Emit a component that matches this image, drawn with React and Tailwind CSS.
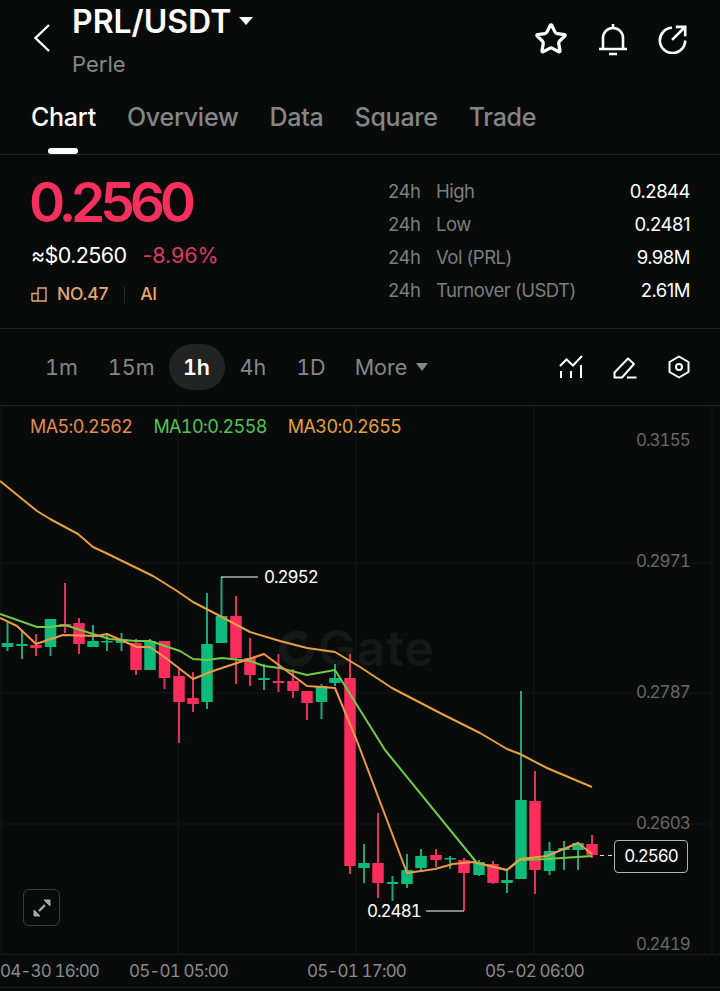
import { Star } from "lucide-react";

const UP = 1;
const DOWN = 0;

// x, wick top, wick bottom, body top, body bottom, direction (page pixels)
const CANDLES = [
  [7.5, 620, 650, 642, 646, UP],
  [22, 630, 658, 643, 645, UP],
  [36, 633, 655, 644, 647, DOWN],
  [50.5, 618, 655, 618, 646, UP],
  [65, 582, 632, 623, 626, DOWN],
  [79, 617, 653, 622, 643, DOWN],
  [93, 624, 646, 640, 646, UP],
  [107, 633, 650, 640, 641.5, UP],
  [121.5, 632, 650, 638, 642, UP],
  [136, 638, 674, 642, 669, DOWN],
  [150, 638, 669, 640, 669, UP],
  [164.5, 640, 688, 640, 677, DOWN],
  [179, 667, 742, 675, 701, DOWN],
  [193, 671, 711, 697, 703, DOWN],
  [207, 592, 708, 643, 701, UP],
  [221.5, 576, 642, 615, 642, UP],
  [236, 595, 683, 615, 657, DOWN],
  [250, 637, 685, 657, 674, DOWN],
  [264, 663, 689, 677, 679, UP],
  [278.5, 653, 691, 680, 682, DOWN],
  [293, 668, 697, 680, 690, DOWN],
  [307, 690, 719, 690, 702, DOWN],
  [321.5, 683, 718, 685, 701, UP],
  [335, 663, 685, 677, 682, UP],
  [350, 653, 873, 677, 865, DOWN],
  [364, 843, 882, 862, 867, UP],
  [378, 812, 897, 862, 882, DOWN],
  [392.5, 875, 900, 881, 883, UP],
  [407, 853, 887, 869, 883, UP],
  [421, 848, 870, 855, 867, UP],
  [436, 848, 866, 854, 859, DOWN],
  [450, 855, 868, 857, 858.5, UP],
  [464, 857, 910, 859, 872, DOWN],
  [479, 859, 875, 861, 874, UP],
  [493, 860, 883, 863, 882, DOWN],
  [507, 868, 892, 879, 882, UP],
  [521, 690, 878, 799, 878, UP],
  [535, 770, 893, 800, 869, DOWN],
  [549.5, 841, 874, 850, 870, UP],
  [564, 840, 869, 847, 849, UP],
  [578, 841, 869, 842, 849, UP],
  [592, 834, 857, 843, 854, DOWN],
];

const MA5 =
  "0,617 17,625 36,643 63,634 97,635 107,633 137,646 150,646 167,658 193,678 213,670 243,660 264,653 307,685 335,687 357,740 407,872 435,868 453,863 473,861 507,869 520,858 547,855 578,842 592,853";
const MA10 =
  "0,613 37,626 50,626 65,624 93,633 110,638 136,640 150,640 180,650 193,658 207,659 222,657 250,660 264,665 280,667 307,674 335,669 385,749 477,862 507,869 520,859 547,858 592,855";
const MA30 =
  "0,480 37,510 50,518 78,533 93,546 108,553 153,575 177,590 193,601 220,615 250,631 280,640 307,647 335,651 360,666 392,687 440,712 480,732 507,748 520,753 547,767 592,786";

const GRID_Y = [562, 692, 823];
const GRID_X = [1, 178, 356, 534];

const PRICE_LABELS = [
  ["0.3155", "top-[23px]"],
  ["0.2971", "top-[144px]"],
  ["0.2787", "top-[275px]"],
  ["0.2603", "top-[406px]"],
  ["0.2419", "top-[527px]"],
];

const STATS = [
  ["High", "0.2844"],
  ["Low", "0.2481"],
  ["Vol (PRL)", "9.98M"],
  ["Turnover (USDT)", "2.61M"],
];

function Chart() {
  return (
    <svg viewBox="0 405 720 581" className="relative block w-[720px] h-[581px]">
      {GRID_Y.map((y) => (
        <line key={y} x1="0" x2="712" y1={y} y2={y} stroke="#161717" strokeWidth="1" />
      ))}
      {GRID_X.map((x) => (
        <line key={x} x1={x} x2={x} y1="405" y2="953" stroke="#161717" strokeWidth="1" />
      ))}
      <line x1="712" x2="712" y1="405" y2="953" stroke="#161717" strokeWidth="1" />
      <line x1="0" x2="720" y1="953.5" y2="953.5" stroke="#1b1b1b" strokeWidth="1" />
      <path d="M306 637a14 14 0 1 0 5 12" fill="none" stroke="#161717" strokeWidth="8" />
      {CANDLES.map(([x, hi, lo, top, bottom, dir]) => (
        <g key={x}>
          <line x1={x} x2={x} y1={hi} y2={lo} stroke={dir === UP ? "#1fa67a" : "#e0325c"} strokeWidth="2" />
          <rect
            x={x - 5.75}
            y={top}
            width="11.5"
            height={bottom - top}
            rx="0.5"
            fill={dir === UP ? "#0dbb7c" : "#fb2d5c"}
          />
        </g>
      ))}
      <polyline points={MA30} fill="none" stroke="#e6a03f" strokeWidth="2" strokeLinejoin="round" />
      <polyline points={MA10} fill="none" stroke="#6fcb45" strokeWidth="2" strokeLinejoin="round" />
      <polyline points={MA5} fill="none" stroke="#ea9a4a" strokeWidth="2" strokeLinejoin="round" />
      <line x1="221" x2="258" y1="576" y2="576" stroke="#fff" strokeWidth="1.2" />
      <line x1="426" x2="464" y1="910" y2="910" stroke="#fff" strokeWidth="1.2" />
      <line x1="600" x2="613" y1="854.5" y2="854.5" stroke="#ddd" strokeWidth="1" strokeDasharray="4 4" />
    </svg>
  );
}

export default function App() {
  return (
    <div className="w-[720px] h-[991px] overflow-hidden bg-[#090a0a] text-white font-['Inter','Liberation_Sans',sans-serif]">
      <section className="h-[155px] border-b border-[#222323]">
        <div className="flex h-[97px] pl-[33px] pr-[32px]">
          <svg viewBox="0 0 18 28" className="w-[18px] h-[28px] mt-[24px] shrink-0" fill="none" stroke="#fff" strokeWidth="2.4">
            <path d="M16 1 2.5 14 16 27" />
          </svg>
          <div className="ml-[21px]">
            <div className="flex items-center h-[44px]">
              <span className="text-[32px] font-semibold leading-[42px]">PRL/USDT</span>
              <span className="ml-[8px] mb-[3px] w-0 h-0 border-x-[7px] border-x-transparent border-t-[8px] border-t-white" />
            </div>
            <div className="text-[22px] leading-[40px] text-[#858686]">Perle</div>
          </div>
          <div className="ml-auto flex gap-[29px] pt-[22px]">
            <Star size={34} strokeWidth={2.3} color="#fff" />
            <svg viewBox="0 0 32 34" className="w-[32px] h-[34px]" fill="none" stroke="#fff" strokeWidth="2.6">
              <path d="M2 27h28M6 27V16a10 10 0 0 1 20 0v11M16 6V2M12 32h8" />
            </svg>
            <svg viewBox="0 0 32 32" className="w-[30px] h-[30px] mt-[2px]" fill="none" stroke="#fff" strokeWidth="2.8">
              <path d="M29 17.5A13.5 13.5 0 1 1 15 4" />
              <path d="M15 17 28 4M19 3h10v10" />
            </svg>
          </div>
        </div>
        <div className="flex gap-[31px] pl-[31px] h-[42px] items-center text-[25px] tracking-[-0.25px] font-medium text-[#858686]">
          <span className="text-white">Chart</span>
          <span>Overview</span>
          <span>Data</span>
          <span>Square</span>
          <span>Trade</span>
        </div>
        <div className="w-[30px] h-[6px] ml-[48px] mt-[9px] rounded-full bg-white" />
      </section>

      <section className="h-[174px] border-b border-[#222323] flex justify-between pl-[31px] pr-[30px]">
        <div className="pt-[19px]">
          <div className="-ml-[2px] text-[55px] leading-[56px] font-semibold tracking-[-5.1px] text-[#f6305d]">0.2560</div>
          <div className="flex h-[28px] mt-[11px] items-center text-[21.5px]">
            <span className="tracking-[-0.6px]">≈$0.2560</span>
            <span className="ml-[16px] tracking-[-0.1px] text-[#d93b5e]">-8.96%</span>
          </div>
          <div className="flex h-[24px] mt-[13px] items-center text-[17.5px] font-medium tracking-[-0.3px] text-[#e6a670]">
            <svg viewBox="0 0 16 16" className="w-[16px] h-[16px] mr-[10px]" fill="none" stroke="#e6a670" strokeWidth="1.4">
              <path d="M1 15V7.5h6V15M7 15V2h8v13H1" />
            </svg>
            <span>NO.47</span>
            <span className="w-px h-[17px] bg-[#2a2a2a] ml-[16px] mr-[15px]" />
            <span>AI</span>
          </div>
        </div>
        <div className="w-[302px] pt-[20px]">
          {STATS.map(([label, value]) => (
            <div key={label} className="flex h-[33px] items-center text-[18.5px] tracking-[-0.5px]">
              <span className="w-[48px] text-[#7d7e7e]">24h</span>
              <span className="text-[#7d7e7e]">{label}</span>
              <span className="ml-auto text-white">{value}</span>
            </div>
          ))}
        </div>
      </section>

      <section className="h-[77px] border-b border-[#222323] flex items-center text-[21.5px] tabular-nums text-[#858686]">
        <div className="flex items-center pl-[45px]">
          <span>1m</span>
          <span className="ml-[30px]">15m</span>
          <span className="ml-[14px] w-[56px] h-[46px] rounded-full bg-[#222323] flex items-center justify-center font-semibold text-white">1h</span>
          <span className="ml-[15px]">4h</span>
          <span className="ml-[30px]">1D</span>
          <span className="ml-[29px]">More</span>
          <span className="ml-[9px] w-0 h-0 border-x-[6px] border-x-transparent border-t-[8px] border-t-[#858686]" />
        </div>
        <div className="ml-auto flex items-center gap-[30px] pr-[29px]">
          <svg viewBox="0 0 24 24" className="w-[24px] h-[24px]" fill="none" stroke="#fff" strokeWidth="2">
            <path d="M1 11 7.5 4.5 14 10.5 23 1" />
            <path d="M2 16v7M12 16v7M22 10v13" />
          </svg>
          <svg viewBox="0 0 24 24" className="w-[24px] h-[24px]" fill="none" stroke="#fff" strokeWidth="2" strokeLinejoin="round">
            <path d="M1.5 22.5v-5L15 3.5l6 5.5-12 13.5H1.5Z" />
            <path d="M14 22.5h9.5" />
          </svg>
          <svg viewBox="0 0 24 24" className="w-[24px] h-[24px]" fill="none" stroke="#fff" strokeWidth="2" strokeLinejoin="round">
            <path d="M12 1.5 21.5 7v10L12 22.5 2.5 17V7L12 1.5Z" />
            <circle cx="12" cy="12" r="3" />
          </svg>
        </div>
      </section>

      <section className="relative h-[581px]">
        <div className="absolute left-[318px] top-[214px] text-[50px] leading-[56px] font-semibold tracking-[1px] text-[#161717]">Gate</div>
        <Chart />
        <div className="absolute inset-x-0 bottom-[-1px] h-px bg-[#1b1b1b]" />
        <div className="absolute left-[30px] top-[9px] flex gap-[21px] text-[18px] leading-[24px] tabular-nums tracking-[-0.6px]">
          <span className="text-[#e58a52]">MA5:0.2562</span>
          <span className="text-[#4fc64f]">MA10:0.2558</span>
          <span className="text-[#e6a03f]">MA30:0.2655</span>
        </div>
        {PRICE_LABELS.map(([price, top]) => (
          <span key={price} className={`absolute left-[636px] text-[17px] leading-[22px] tabular-nums tracking-[-1px] text-[#666767] ${top}`}>
            {price}
          </span>
        ))}
        <span className="absolute left-[264px] top-[160px] text-[17px] leading-[22px] tabular-nums tracking-[-1px]">0.2952</span>
        <span className="absolute left-[367px] top-[494px] text-[17px] leading-[22px] tabular-nums tracking-[-1px]">0.2481</span>
        <span className="absolute left-[614px] top-[434px] w-[74px] h-[33px] bg-[#090a0a] border border-[#b5b5b5] rounded-[4px] flex items-center justify-center text-[17px] tabular-nums tracking-[-1px]">0.2560</span>
        <div className="absolute left-[23px] top-[483px] w-[37px] h-[37px] border border-[#3a3b3b] rounded-[6px] flex items-center justify-center">
          <svg viewBox="0 0 18 18" className="w-[18px] h-[18px]" fill="#a8a8a8" stroke="#a8a8a8">
            <path d="M11 1h6v6ZM1 11v6h6Z" />
            <path d="M6 12 12 6" strokeWidth="2.4" />
          </svg>
        </div>
        <div className="absolute inset-x-0 top-[554px] text-[17px] leading-[22px] tabular-nums tracking-[-0.85px] text-[#8a8b8b]">
          <span className="absolute left-0">04-30 16:00</span>
          <span className="absolute left-[129px]">05-01 05:00</span>
          <span className="absolute left-[307px]">05-01 17:00</span>
          <span className="absolute left-[485px]">05-02 06:00</span>
        </div>
      </section>
    </div>
  );
}
